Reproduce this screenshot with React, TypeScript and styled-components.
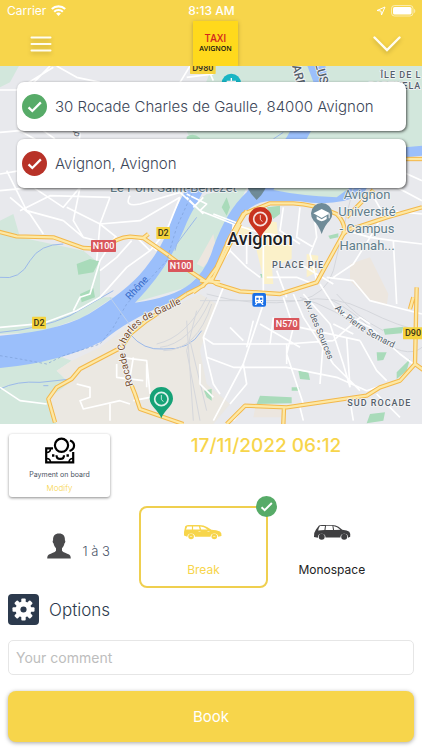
import React, { useState } from "react";
import styled, { createGlobalStyle } from "styled-components";

const yellow = "#f7d54b";
const navy = "#2c3a4d";
const green = "#57ab68";

const GlobalStyle = createGlobalStyle`
  *, *::before, *::after { box-sizing: border-box; }
  body { margin: 0; background: #fff; font-family: Inter, "Liberation Sans", sans-serif; }
  button, input { font: inherit; color: inherit; }
  button { cursor: pointer; border: 0; padding: 0; background: none; }
  svg { display: block; flex: none; }
`;

const Page = styled.div`
  display: flex;
  flex-direction: column;
  min-height: 100vh;
`;

const Header = styled.header`
  background: ${yellow};
  color: #fff;
`;

const StatusBar = styled.div`
  display: grid;
  grid-template-columns: 1fr auto 1fr;
  align-items: center;
  height: 21px;
  padding: 0 6px 0 7px;
  font-size: 12px;
  line-height: 20px;
`;

const StatusGroup = styled.div<{ $end?: boolean }>`
  display: flex;
  align-items: center;
  justify-content: ${(p) => (p.$end ? "flex-end" : "flex-start")};
  gap: 5px;
`;

const Clock = styled.span`
  font-weight: 500;
`;

const NavBar = styled.nav`
  display: grid;
  grid-template-columns: 1fr auto 1fr;
  align-items: center;
  height: 45px;
  padding: 0 21px 0 30px;
`;

const NavButton = styled.button<{ $end?: boolean }>`
  justify-self: ${(p) => (p.$end ? "end" : "start")};
  filter: drop-shadow(0 2px 2px rgba(0, 0, 0, 0.2));
`;

const Logo = styled.div`
  display: flex;
  flex-direction: column;
  align-items: center;
  justify-content: center;
  width: 45px;
  height: 45px;
  background: #ffd91c;
  box-shadow: 0 1px 4px rgba(0, 0, 0, 0.25);
  font-family: "Open Sans", sans-serif;
  font-weight: 600;
  color: #111;
  font-size: 7px;
  line-height: 10px;
`;

const LogoTitle = styled.span`
  color: #d3281c;
  font-size: 10px;
  line-height: 11px;
`;

const MapArea = styled.section`
  position: relative;
  flex: 1;
  min-height: 320px;
  overflow: hidden;
`;

const MapDrawing = styled.svg`
  position: absolute;
  inset: 0;
  width: 100%;
  height: 100%;
`;

const Addresses = styled.div`
  position: relative;
  display: flex;
  flex-direction: column;
  gap: 8px;
  padding: 16px 16px 0 17px;
`;

const AddressCard = styled.button`
  display: flex;
  align-items: center;
  gap: 8px;
  height: 49px;
  padding: 0 5px;
  border-radius: 7px;
  background: #fff;
  box-shadow: 1px 1px 3px rgba(0, 0, 0, 0.65);
  color: #3c4658;
  font-size: 15px;
  font-weight: 300;
  line-height: 20px;
  text-align: left;
`;

const Panel = styled.main`
  display: flex;
  flex-direction: column;
  padding: 10px 8px 8px;
`;

const Summary = styled.div`
  display: flex;
  align-items: flex-start;
  padding-left: 1px;
`;

const PaymentCard = styled.div`
  display: flex;
  flex-direction: column;
  align-items: center;
  width: 101px;
  height: 63px;
  padding-top: 3px;
  border-radius: 3px;
  box-shadow: 0 1px 3px rgba(0, 0, 0, 0.45);
  color: #4a5362;
  font-size: 7px;
  line-height: 9px;
`;

const PaymentLabel = styled.span`
  margin-top: 5px;
`;

const ModifyButton = styled.button`
  margin-top: 4px;
  color: ${yellow};
  font-size: 8px;
  font-weight: 300;
  line-height: 10px;
`;

const DateTime = styled.time`
  flex: 1;
  padding-left: 8px;
  color: ${yellow};
  font-size: 19px;
  font-weight: 500;
  line-height: 24px;
  text-align: center;
`;

const VehicleRow = styled.div`
  display: grid;
  grid-template-columns: repeat(3, 1fr);
  margin-top: 9px;
  padding: 0 18px 0 3px;
`;

const Passengers = styled.div`
  display: flex;
  align-items: flex-end;
  justify-content: center;
  gap: 11px;
  padding: 0 0 29px 7px;
  color: #4a5568;
  font-size: 13px;
  font-weight: 300;
  line-height: 15px;
`;

const VehicleOption = styled.button<{ $selected: boolean }>`
  position: relative;
  display: flex;
  flex-direction: column;
  align-items: center;
  height: 82px;
  padding-top: 16px;
  border: 2px solid ${(p) => (p.$selected ? "#efcf4f" : "transparent")};
  border-radius: 8px;
  color: ${(p) => (p.$selected ? yellow : "#222")};
  font-size: 12px;
  line-height: 16px;
`;

const VehicleName = styled.span`
  margin-top: 22px;
`;

const SelectedBadge = styled.span`
  position: absolute;
  top: -12px;
  right: -11px;
`;

const OptionsButton = styled.button`
  display: flex;
  align-items: center;
  align-self: flex-start;
  gap: 10px;
  margin-top: 6px;
  color: ${navy};
  font-size: 17px;
  font-weight: 300;
  line-height: 24px;
`;

const OptionsIcon = styled.span`
  display: grid;
  place-items: center;
  width: 31px;
  height: 31px;
  border-radius: 4px;
  background: ${navy};
`;

const Comment = styled.input`
  width: 100%;
  height: 35px;
  margin-top: 15px;
  padding: 0 7px;
  border: 1px solid #e6e6e6;
  border-radius: 5px;
  background: #fff;
  color: ${navy};
  font-size: 14px;
  &::placeholder { color: #bdbdbd; opacity: 1; }
`;

const BookButton = styled.button`
  height: 51px;
  margin-top: 16px;
  border-radius: 8px;
  background: ${yellow};
  box-shadow: 0 1px 4px rgba(0, 0, 0, 0.35);
  color: #fff;
  font-size: 15px;
  line-height: 20px;
`;

const CheckCircle = ({ color, size }: { color: string; size: number }) => (
  <svg width={size} height={size} viewBox="0 0 24 24" aria-hidden="true">
    <circle cx="12" cy="12" r="12" fill={color} />
    <path d="M6.3 12.8l3.6 3.5 8.2-8.3" fill="none" stroke="#fff" strokeWidth="2.2" />
  </svg>
);

const WifiIcon = () => (
  <svg width="15" height="11" viewBox="0 0 15 11" fill="none" stroke="#fff" strokeWidth="2.1" aria-hidden="true">
    <path d="M.8 4.1a9.6 9.6 0 0 1 13.4 0" />
    <path d="M3.2 6.7a6.2 6.2 0 0 1 8.6 0" />
    <path d="M5.1 8.6a3.5 3.5 0 0 1 4.8 0L7.5 11z" fill="#fff" stroke="none" />
  </svg>
);

const LocationIcon = () => (
  <svg width="10" height="10" viewBox="0 0 10 10" fill="none" stroke="#fff" strokeLinejoin="round" aria-hidden="true">
    <path d="M9 1L5.5 9 5 5 1 4.5z" />
  </svg>
);

const BatteryIcon = () => (
  <svg width="25" height="12" viewBox="0 0 25 12" aria-hidden="true">
    <rect x=".5" y=".5" width="21.5" height="10.5" rx="3" fill="none" stroke="#fff" strokeOpacity=".55" />
    <rect x="2" y="2" width="18.5" height="7.5" rx="1.6" fill="#fff" />
    <path d="M23.2 4v4c1.4-.4 1.4-3.6 0-4z" fill="#fff" fillOpacity=".6" />
  </svg>
);

const MenuIcon = () => (
  <svg width="22" height="16" viewBox="0 0 22 16" stroke="#fffdf2" strokeWidth="2" strokeLinecap="round" aria-hidden="true">
    <path d="M1.5 1.5h19M1.5 8h19M1.5 14.5h19" />
  </svg>
);

const ChevronIcon = () => (
  <svg width="28" height="16" viewBox="0 0 28 16" fill="none" stroke="#fffdf2" strokeWidth="2.4" strokeLinecap="round" aria-hidden="true">
    <path d="M1.5 1.5L14 14 26.5 1.5" />
  </svg>
);

const CashIcon = () => (
  <svg width="32" height="28" viewBox="0 0 32 28" fill="none" stroke="#000" aria-hidden="true">
    <path d="M9 11.400H2.200v14h27v-10.500" strokeWidth="2.200" />
    <path d="M2.500 15.500q4 0 4-4M2.500 21.500q4 0 4 4M29 21.500q-4 0-4 4" strokeWidth="1.600" />
    <circle cx="17.500" cy="8.300" r="6.600" strokeWidth="2.200" />
    <path d="M26 3.500c5.500 2 5.500 8.500-.5 10.500" strokeWidth="2.200" />
    <path d="M12.500 18.200c0 5 7.500 5 7.500 0" strokeWidth="2.200" />
    <path d="M8 18.500h2.400M22.500 18.500h2.400" strokeWidth="2.400" />
  </svg>
);

const PersonIcon = () => (
  <svg width="24" height="26" viewBox="0 0 24 26" fill="#4a4a4c" aria-hidden="true">
    <path d="M12 .5c4.200 0 6.200 2.400 5.900 6.800.8.500.5 2.600-.5 3.300-.4 2.300-1.300 3.700-2.400 4.700v2.400c1.100 1.700 4.900 2.500 7.100 3.800 1.200.7 1.600 2.300 1.700 4H.2c.1-1.700.5-3.300 1.700-4 2.200-1.300 6-2.100 7.100-3.800v-2.400c-1.100-1-2-2.400-2.400-4.700-1-.7-1.300-2.800-.5-3.300C5.800 2.900 7.800.5 12 .5z" />
  </svg>
);

const BreakCarIcon = () => (
  <svg width="40" height="16" viewBox="0 0 40 16" aria-hidden="true">
    <path fill="currentColor" d="M2.200 2.300Q3 1.200 5 1h11q5 0 8 2l4.500 2.700q5 .3 8.500 1.700 1.800 1 1.500 4.500l-3.300.8a3.900 3.900 0 0 0-7.700 0H12a3.900 3.900 0 0 0-7.700 0L1 11.500 1 8z" />
    <path fill="#fff" d="M4.300 2.400h4.600v3H3zM10.100 2.400h5.800l.8 3h-6.600zM17.200 2.500q3.500.2 7.500 3.100h-6.500z" />
    <circle cx="8.100" cy="12.500" r="2.800" fill="currentColor" />
    <circle cx="31.300" cy="12.500" r="2.800" fill="currentColor" />
    <path stroke="#fff" strokeWidth=".5" d="M15.500 7.500h2M24.500 7.500h2M7 12.500h2.200M30.200 12.500h2.200" />
  </svg>
);

const MonospaceCarIcon = () => (
  <svg width="40" height="16" viewBox="0 0 40 16" aria-hidden="true">
    <path fill="#3f3f41" d="M4 5.500L7 1.600Q8 .9 10 .9h10q4 0 6.500 1.800l3.800 3q5 .4 7 2 1.300 1.600.9 5l-2.200 1.100a3.800 3.800 0 0 0-7.600-.3H13.500a3.800 3.800 0 0 0-7.600.2L2 13Q1.400 9 4 5.500z" />
    <path fill="#fff" d="M8 1.900h5l-.6 4.200-6.300.3q.3-2.200 1.900-4.500zM14 1.800h6.400l.6 4.100-7.500.2zM21.400 1.900q3.700.3 7 3.900l-6.300.1z" />
    <circle cx="9.700" cy="12.800" r="3" fill="#3f3f41" />
    <circle cx="32.200" cy="12.800" r="3" fill="#3f3f41" />
  </svg>
);

const teeth = [0, 45, 90, 135, 180, 225, 270, 315];
const GearIcon = () => (
  <svg width="23" height="23" viewBox="-12 -12 24 24" fill="#fff" aria-hidden="true">
    {teeth.map((angle) => (
      <rect key={angle} x="-2.300" y="-11.500" width="4.600" height="6" rx="1" transform={`rotate(${angle})`} />
    ))}
    <circle r="8.300" />
    <circle r="3.200" fill={navy} />
  </svg>
);

/* Map data, drawn on a 1266-unit-wide grid */
const minorRoads = [
  "M0 78H50L160 10M50 78L95 62 150 6M170 6L230 40 300 55M540 55L570 6M560 40L640 30M620 6L640 50M0 205L60 200 130 240M130 200L165 225M240 205L235 260",
  "M0 330L60 320M0 380L100 370 190 430 240 370M20 320L80 440 190 470M60 440L150 395 330 400M190 470L250 520 330 540M200 430L300 480 420 470 540 400M240 370L220 470 250 520M330 400L300 480 350 520M390 395Q370 430 420 420L540 385M90 450L130 510M30 400L90 450",
  "M540 400L500 500 450 560 380 610 300 700 230 740 130 778 0 790M450 560L410 520M430 520L470 560M345 520L300 590 270 690 240 700 220 740M300 480L290 590M395 530L350 580 300 620",
  "M540 385L600 440 700 480 760 500M580 430L610 400M640 450L720 480M600 440L620 420 560 390M560 400L610 450",
  "M700 480L690 560 740 610 780 640M780 450L790 500 790 690M740 530L740 600M850 430L840 500 900 540M900 430L890 520 940 550M760 500L860 520M690 560L660 600M800 640L890 640 940 660M830 620L860 700M940 430L950 520 930 570 950 650M900 600L1000 660",
  "M1040 500L1110 520 1180 530 1190 720M1110 380L1150 450 1110 520M1190 370L1266 410M1266 450L1160 440M1180 530L1266 540M1110 520L1060 600 1000 640M980 640L1060 650 1110 710 1266 750M1200 320L1266 350",
  "M670 670L610 820 640 840 860 840 1000 830M800 690L730 900 640 1070M850 700L880 790 860 870 910 1020M880 690L910 760 1000 900 1080 980M910 690L990 780 1030 900 1050 970M960 660L1010 740 1110 790 1200 870 1240 900M610 820L620 880 700 910 860 910 1010 940 1100 980 1160 960M730 900L740 960 690 1020M860 840L860 900M1000 830L1080 760 1110 780M780 780L900 850M690 790L730 830M760 770L740 850M820 760L810 840M900 790L1080 830M970 830L960 960M1040 820L1050 970M1080 830L1130 920 1160 950M1000 780L1060 810",
  "M360 880L440 890 450 990M350 900L350 940 430 950M400 880L390 940M230 960L270 970 270 1000 240 1010 250 1035 360 1010 390 1020M330 1020L330 1070M400 1010L450 1000M440 900L440 970M640 1000L600 960 600 900M620 880L640 960 660 990M740 1020L700 1070M900 1030L910 1070M1050 1010L1060 1070M1130 990L1200 1060M0 970L60 1010 140 1020",
];

const mainRoads = [
  "M-5 503L50 517 160 520 250 552 310 555Q350 520 390 518L430 522 500 570 560 615 620 655M430 522L445 510",
  "M720 480L670 580 635 650 650 660 720 682 840 690 950 655 1030 510Q1040 480 1010 450 940 420 880 418L810 418 730 450 680 540",
  "M740 440L690 520 650 610 610 665 560 690M600 650L660 655M640 640L580 685",
  "M1030 510Q1050 490 1070 490L1160 460 1266 430M1040 460L1120 378",
  "M560 690L440 770 390 810 365 850",
  "M355 855L240 915 215 945 170 970 145 1005 165 1075",
  "M395 965L405 990 420 1035 550 1080",
  "M680 1080L735 1025 860 1030 1100 995 1140 970 1200 950 1245 900 1250 670M1245 900L1270 918M852 1030L850 1080M1240 700L1230 735",
  "M1215 285H1270",
];

const fieldShapes = [
  "M0 470L40 450 60 520 250 560 300 600 300 700 340 700 250 760 120 805 0 810z",
  "M0 900L160 870 215 890 170 920 210 960 150 1000 170 1080H0z",
  "M640 0H900L1266 0V245L1220 260 1060 375 1000 410 880 390 760 370 620 350 560 200z",
  "M550 440L620 390 740 370 700 460 630 600 560 670 405 715 500 600z",
  "M0 0H60L30 55 0 70z",
];

const parkShapes = [
  "M230 600L270 585 298 592 280 625 235 632zM240 690L280 672 285 700 245 715z",
  "M800 430L840 425 840 450 820 465zM665 430L680 400 690 430 680 455zM780 630H808V642H785zM985 515L1015 508V520L990 525zM560 218Q580 205 600 222V240H560z",
  "M780 995L875 1000V1018L770 1020zM895 920L925 925 930 948 900 945zM875 970H898V980H875zM1130 865H1160L1150 888 1132 890zM1190 925L1230 885 1220 920 1190 945zM1150 795L1210 788 1205 808 1155 812zM1110 1050L1155 1045 1150 1070 1100 1078zM612 980L635 975V1010L620 1000z",
];

const Pin = ({ x, y, color }: { x: number; y: number; color: string }) => (
  <g transform={`translate(${x} ${y})`}>
    <path d="M0 0C-8-24-35-38-35-59A35 35 0 0 1 35-59C35-38 8-24 0 0z" fill={color} />
    <circle cy="-58" r="20" fill="none" stroke="#fff" strokeOpacity=".85" strokeWidth="5" />
    <path d="M0-70V-57L6-50" fill="none" stroke="#fff" strokeOpacity=".75" strokeWidth="3" />
  </g>
);

const RoadSign = ({ x, y, width, text, red }: { x: number; y: number; width: number; text: string; red?: boolean }) => (
  <g>
    <rect x={x} y={y} width={width} height={36} rx="2" fill={red ? "#d9565c" : "#f5d33d"} />
    <text x={x + width / 2} y={y + 27} textAnchor="middle" fontSize="27" fontWeight="500" fill={red ? "#fff" : "#3a3517"}>
      {text}
    </text>
  </g>
);

const CityMap = () => (
  <MapDrawing viewBox="0 6 1266 1074" preserveAspectRatio="xMidYMid slice" fontFamily="Roboto, sans-serif" role="img" aria-label="Map of Avignon">
    <defs>
      <path id="rocade" d="M400 964Q376 890 374 845Q392 798 440 768L640 673" />
      <path id="sources" d="M912 712L1010 948" />
      <path id="semard" d="M1004 734Q1080 815 1240 878" />
      <path id="rhone" d="M389 709L470 623" />
    </defs>
    <rect width="1266" height="1080" fill="#e8e9ed" />
    {fieldShapes.map((d) => <path key={d} d={d} fill="#d2e7dc" />)}
    <path fill="#ebe8e2" d="M170 920L215 890 300 850 380 790 600 690 650 720 620 800 600 860 620 960 690 1020 640 1080H170L150 1000 210 955z" />
    <path fill="#ece6df" d="M1050 600L1110 580 1165 690 1160 725 1110 710 1050 650zM590 600L640 510 650 560 610 610zM770 1010L850 1030 850 1060H760z" />
    {parkShapes.map((d) => <path key={d} d={d} fill="#a9dbba" />)}
    <path fill="#fbf1c9" d="M800 470L830 475 835 530 875 545 875 585 840 600 815 600 820 660 790 660 785 620 770 560 775 490zM920 570L955 575 950 625 920 640zM720 490L750 490 750 530 720 520z" />
    <path
      fill="#9bbffb"
      d="M0 815Q200 800 290 735Q400 665 445 600Q500 530 515 460Q540 410 570 350H625L590 420Q570 450 550 500Q500 620 405 716Q520 700 570 660Q620 620 640 550Q680 440 740 385Q810 280 860 220L905 140 950 80 920 0H975L990 80 960 150 920 225 850 330 820 378Q900 395 1010 400Q1120 320 1215 250L1266 245V275L1220 280Q1120 330 1090 390Q1010 430 900 412H800Q740 420 700 490Q660 590 640 630Q600 690 500 720Q380 770 310 830Q180 895 0 912z"
    />
    <g fill="none" stroke="#9bb9ea" strokeWidth="3">
      <path d="M0 640Q60 650 90 590Q120 540 190 540M0 975Q50 950 120 955L215 945M390 810Q430 860 490 855Q570 860 605 800M0 805Q120 795 210 755L340 680M525 560L530 540 590 460M820 225L850 205M130 965H145" />
    </g>
    <g fill="none" stroke="#d5d7dc" strokeWidth="3">
      <path d="M620 690Q760 730 900 710Q980 690 1000 620L1060 370M600 710H900Q1000 690 1100 740T1266 800M900 700Q1000 730 1110 810T1266 850M470 840Q560 820 620 700M480 850Q570 840 630 710M490 860Q590 860 635 720M560 770L580 1070M590 740L560 860 600 1070M570 830L620 1040M980 700Q1060 740 1120 800M1010 690Q1070 760 1150 800" />
    </g>
    <g fill="none" stroke="#fff" strokeWidth="5" strokeLinejoin="round">
      {minorRoads.map((d) => <path key={d} d={d} />)}
    </g>
    <g fill="none" stroke="#f3b84b" strokeWidth="13" strokeLinejoin="round">
      {mainRoads.map((d) => <path key={d} d={d} />)}
    </g>
    <g fill="none" stroke="#fde8a4" strokeWidth="7" strokeLinejoin="round">
      {mainRoads.map((d) => <path key={d} d={d} />)}
    </g>
    <g fill="none" stroke="#7b9ed6" strokeWidth="2" strokeDasharray="8 7">
      <path d="M0 875L60 885 140 900 190 875 300 840 340 790 380 720 500 590 530 490 575 390M910 140L940 60" />
    </g>
    <path d="M330 700L395 790" stroke="#bcd0ec" strokeWidth="3" />

    <path d="M770 408Q735 375 738 340H802Q805 375 770 408z" fill="#6f8b98" />
    <circle cx="694" cy="58" r="29" fill="#18b5c4" />
    <path d="M694 42V60M680 52H708" stroke="#fff" strokeWidth="4" />
    <path d="M965 510Q955 482 941 470A32 32 0 1 1 989 470Q975 482 965 510z" fill="#6f8b98" />
    <path d="M965 435L990 448 965 462 940 448zM950 457V465Q965 478 980 465V457L965 466zM986 448V463H989V448z" fill="#fff" />

    <RoadSign x={570} y={-6} width={77} text="D980" />
    <RoadSign x={469} y={489} width={41} text="D2" />
    <RoadSign x={96} y={758} width={42} text="D2" />
    <RoadSign x={1209} y={790} width={60} text="D90" />
    <RoadSign x={273} y={528} width={75} text="N100" red />
    <RoadSign x={504} y={588} width={75} text="N100" red />
    <RoadSign x={822} y={762} width={76} text="N570" red />

    <rect x="757" y="687" width="41" height="41" rx="6" fill="#1a6fe6" />
    <path d="M768 695h19q3 0 3 3v16q0 3-3 3l4 6h-5l-3-5h-11l-3 5h-5l4-6q-3 0-3-3v-16q0-3 3-3z" fill="#fff" />
    <path d="M769 701h7v6h-7zM780 701h7v6h-7zM770 711h3v3h-3zM783 711h3v3h-3z" fill="#1a6fe6" />

    <g fill="#55606b" stroke="#f4f5f6" strokeWidth="5" paintOrder="stroke" strokeLinejoin="round">
      <text x="330" y="383" fontSize="39" fill="#5f7a87">Le Pont Saint-Bénézet</text>
      <g fontSize="39" fill="#607d8b" textAnchor="middle">
        <text x="1101" y="404">Avignon</text>
        <text x="1101" y="455">Université</text>
        <text x="1101" y="506">- Campus</text>
        <text x="1101" y="557">Hannah...</text>
      </g>
      <g fontSize="27" fontWeight="500" letterSpacing="3">
        <text x="816" y="613">PLACE PIE</text>
        <text x="1042" y="1026">SUD ROCADE</text>
        <text x="1264" y="42" textAnchor="end">ÎLE DE L</text>
        <text x="1264" y="75" textAnchor="end">BARTHELA</text>
      </g>
      <g fontSize="27">
        <text><textPath href="#sources">Av. des Sources</textPath></text>
        <text><textPath href="#semard">Av. Pierre Semard</textPath></text>
        <text x="222" y="221" transform="rotate(-75 228 212)">d</text>
      </g>
      <text fontSize="30" fill="#754c2c"><textPath href="#rocade">Rocade Charles de Gaulle</textPath></text>
      <text transform="translate(876 6) rotate(75)" fontSize="36" fontWeight="500">ARD</text>
      <text transform="translate(945 0) rotate(75)" fontSize="36" fontWeight="500">LUS</text>
    </g>
    <text fontSize="30" fill="#3569c7"><textPath href="#rhone">Rhône</textPath></text>
    <text x="780" y="542" textAnchor="middle" fontSize="54" fontWeight="500" fill="#202124" stroke="#fff" strokeWidth="5" paintOrder="stroke">Avignon</text>
    <Pin x={781} y={523} color="#c8321f" />
    <Pin x={484} y={1063} color="#16a277" />
  </MapDrawing>
);

const vehicles = [
  { name: "Break", Icon: BreakCarIcon },
  { name: "Monospace", Icon: MonospaceCarIcon },
];

export default function App() {
  const [vehicle, setVehicle] = useState("Break");
  return (
    <Page>
      <GlobalStyle />
      <Header>
        <StatusBar>
          <StatusGroup>Carrier <WifiIcon /></StatusGroup>
          <Clock>8:13 AM</Clock>
          <StatusGroup $end><LocationIcon /><BatteryIcon /></StatusGroup>
        </StatusBar>
        <NavBar>
          <NavButton aria-label="Menu"><MenuIcon /></NavButton>
          <Logo><LogoTitle>TAXI</LogoTitle>AVIGNON</Logo>
          <NavButton $end aria-label="Collapse"><ChevronIcon /></NavButton>
        </NavBar>
      </Header>

      <MapArea>
        <CityMap />
        <Addresses>
          <AddressCard><CheckCircle color={green} size={25} />30 Rocade Charles de Gaulle, 84000 Avignon</AddressCard>
          <AddressCard><CheckCircle color="#b83228" size={25} />Avignon, Avignon</AddressCard>
        </Addresses>
      </MapArea>

      <Panel>
        <Summary>
          <PaymentCard>
            <CashIcon />
            <PaymentLabel>Payment on board</PaymentLabel>
            <ModifyButton>Modify</ModifyButton>
          </PaymentCard>
          <DateTime dateTime="2022-11-17T06:12">17/11/2022 06:12</DateTime>
        </Summary>

        <VehicleRow>
          <Passengers><PersonIcon />1 à 3</Passengers>
          {vehicles.map(({ name, Icon }) => (
            <VehicleOption key={name} $selected={vehicle === name} aria-pressed={vehicle === name} onClick={() => setVehicle(name)}>
              <Icon />
              <VehicleName>{name}</VehicleName>
              {vehicle === name && <SelectedBadge><CheckCircle color={green} size={21} /></SelectedBadge>}
            </VehicleOption>
          ))}
        </VehicleRow>

        <OptionsButton><OptionsIcon><GearIcon /></OptionsIcon>Options</OptionsButton>
        <Comment type="text" aria-label="Your comment" placeholder="Your comment" />
        <BookButton>Book</BookButton>
      </Panel>
    </Page>
  );
}
